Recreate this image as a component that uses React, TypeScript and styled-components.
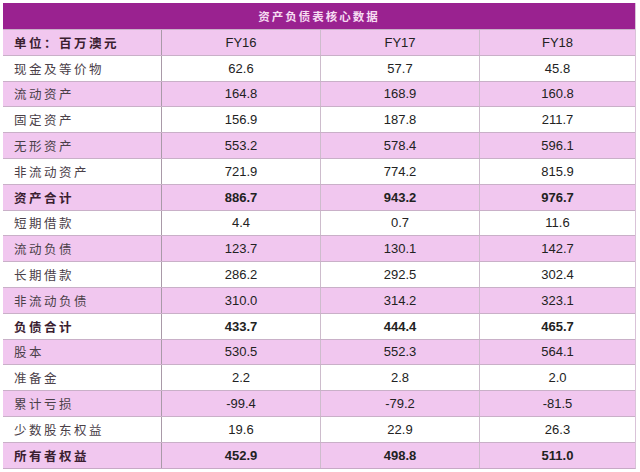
import styled, { createGlobalStyle } from 'styled-components'

const GlobalStyle = createGlobalStyle`
  html, body {
    margin: 0;
    padding: 0;
    background: #ffffff;
  }
`

const rows: [string, string, string, string, boolean][] = [
  ['现金及等价物', '62.6', '57.7', '45.8', false],
  ['流动资产', '164.8', '168.9', '160.8', false],
  ['固定资产', '156.9', '187.8', '211.7', false],
  ['无形资产', '553.2', '578.4', '596.1', false],
  ['非流动资产', '721.9', '774.2', '815.9', false],
  ['资产合计', '886.7', '943.2', '976.7', true],
  ['短期借款', '4.4', '0.7', '11.6', false],
  ['流动负债', '123.7', '130.1', '142.7', false],
  ['长期借款', '286.2', '292.5', '302.4', false],
  ['非流动负债', '310.0', '314.2', '323.1', false],
  ['负债合计', '433.7', '444.4', '465.7', true],
  ['股本', '530.5', '552.3', '564.1', false],
  ['准备金', '2.2', '2.8', '2.0', false],
  ['累计亏损', '-99.4', '-79.2', '-81.5', false],
  ['少数股东权益', '19.6', '22.9', '26.3', false],
  ['所有者权益', '452.9', '498.8', '511.0', true],
]

const App = () => {
  return (
    <>
      <GlobalStyle />
      <Page>
        <Table>
          <Title>资产负债表核心数据</Title>
          <Row $pink>
            <Label $bold>单位：百万澳元</Label>
            <Cell>FY16</Cell>
            <Cell>FY17</Cell>
            <Cell>FY18</Cell>
          </Row>
          {rows.map(([name, a, b, c, bold], i) => (
            <Row key={name} $pink={i % 2 === 1}>
              <Label $bold={bold}>{name}</Label>
              <Cell $bold={bold}>{a}</Cell>
              <Cell $bold={bold}>{b}</Cell>
              <Cell $bold={bold}>{c}</Cell>
            </Row>
          ))}
        </Table>
      </Page>
    </>
  )
}

const Page = styled.div`
  width: 640px;
  height: 472px;
  padding: 3px 4px 5px 3px;
  box-sizing: border-box;
  background: #ffffff;
`

const Table = styled.div`
  display: flex;
  flex-direction: column;
  border-bottom: 1px solid #c7a9c6;
  border-right: 1px solid #d9c3d8;
`

const Title = styled.div`
  height: 26px;
  background: #9a2290;
  color: #f6dcf2;
  font-family: 'Noto Sans CJK SC', serif;
  font-weight: 700;
  font-size: 11.5px;
  letter-spacing: 2px;
  display: flex;
  align-items: center;
  justify-content: center;
`

const Row = styled.div<{ $pink?: boolean }>`
  display: grid;
  grid-template-columns: 159px 159px 159px 1fr;
  height: 25.8px;
  box-sizing: border-box;
  background: ${(p) => (p.$pink ? '#f1c7ef' : '#ffffff')};
  border-top: 1px solid #c9b0c8;
`

const Label = styled.div<{ $bold?: boolean }>`
  display: flex;
  align-items: center;
  padding-left: 11px;
  font-family: 'Noto Sans CJK SC', serif;
  font-size: 12.5px;
  letter-spacing: 2.5px;
  color: ${(p) => (p.$bold ? '#3a2030' : '#4a4048')};
  font-weight: ${(p) => (p.$bold ? 700 : 400)};
  border-right: 1px solid #a99aa8;
`

const Cell = styled.div<{ $bold?: boolean }>`
  display: flex;
  align-items: center;
  justify-content: center;
  font-family: 'Liberation Sans', Arial, sans-serif;
  font-size: 13px;
  color: #222222;
  font-weight: ${(p) => (p.$bold ? 700 : 400)};
  border-right: 1px solid #cdbccc;
  &:last-child {
    border-right: none;
  }
`

export default App
